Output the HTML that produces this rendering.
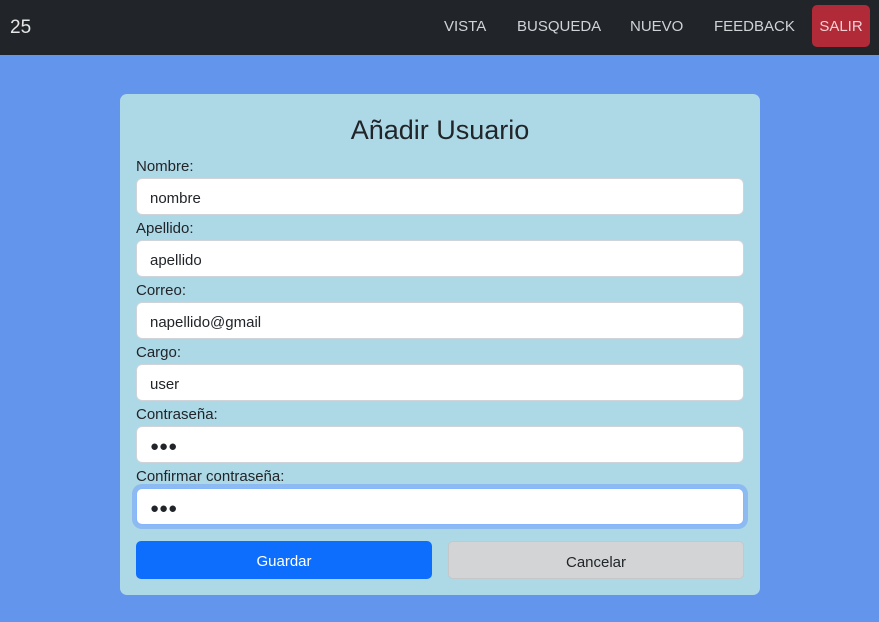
<!DOCTYPE html>
<html><head><meta charset="utf-8"><style>
*{box-sizing:border-box;margin:0;padding:0}
body{width:879px;height:622px;background:#6495ed;font-family:"Liberation Sans",sans-serif;position:relative;overflow:hidden}
.nav{position:absolute;left:0;top:0;width:879px;height:55px;background:#212529}
.brand{position:absolute;left:10px;top:17px;color:#e6e6e6;font-size:19px}
.nl{position:absolute;top:18px;color:#d0d3d6;font-size:15px}
.salir{position:absolute;left:812px;top:5px;width:58px;height:42px;background:#b02a37;border-radius:5px;color:#f3d0d3;font-size:15px;text-align:center;line-height:44px}
.card{position:absolute;left:120px;top:94px;width:640px;height:501px;background:#add8e6;border-radius:7px}
h1{position:absolute;left:0;width:640px;top:21px;text-align:center;font-weight:normal;font-size:27px;color:#212529}
.lab{position:absolute;left:16px;font-size:15px;color:#212529}
.in{position:absolute;left:16px;width:608px;height:37px;background:#fff;border:1px solid #ced4da;border-radius:6px;font-size:15px;color:#212529;padding-left:13px;line-height:39px}
.focus{border:1px solid #86b7fe;box-shadow:0 0 0 4px #8dbaf0}
.dots{font-size:15px;letter-spacing:0px}
.btn{position:absolute;top:447px;height:38px;width:296px;border-radius:5px;text-align:center;line-height:42px;font-size:15px}
</style></head><body>
<div class="nav"><div class="brand">25</div>
<span class="nl" style="left:444px">VISTA</span>
<span class="nl" style="left:517px">BUSQUEDA</span>
<span class="nl" style="left:630px">NUEVO</span>
<span class="nl" style="left:714px">FEEDBACK</span>
<div class="salir">SALIR</div></div>
<div class="card">
<h1>Añadir Usuario</h1>
<div class="lab" style="top:64px">Nombre:</div><div class="in" style="top:84px">nombre</div>
<div class="lab" style="top:126px">Apellido:</div><div class="in" style="top:146px">apellido</div>
<div class="lab" style="top:188px">Correo:</div><div class="in" style="top:208px">napellido@gmail</div>
<div class="lab" style="top:250px">Cargo:</div><div class="in" style="top:270px">user</div>
<div class="lab" style="top:312px">Contraseña:</div><div class="in dots" style="top:332px">●●●</div>
<div class="lab" style="top:374px">Confirmar contraseña:</div><div class="in dots focus" style="top:394px">●●●</div>
<div class="btn" style="left:16px;background:#0d6efd;color:#fff">Guardar</div>
<div class="btn" style="left:328px;background:#d3d4d5;border:1px solid #c6c7c8;color:#212529">Cancelar</div>
</div>
</body></html>
